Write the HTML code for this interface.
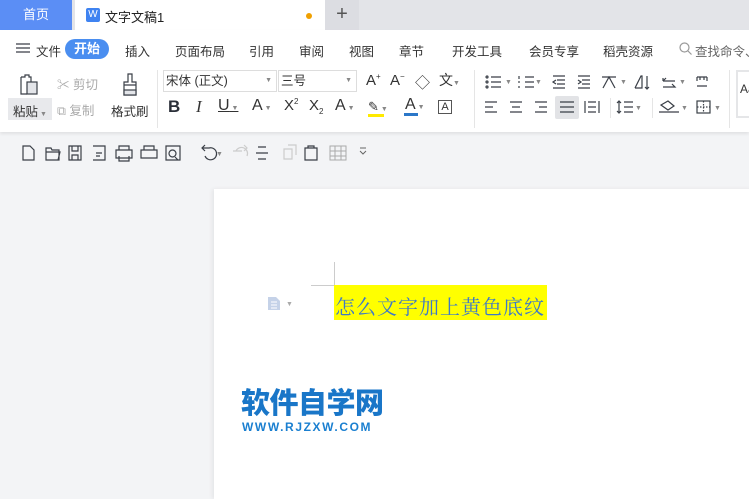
<!DOCTYPE html>
<html><head><meta charset="utf-8"><style>
*{margin:0;padding:0;box-sizing:border-box}
body{width:749px;height:492px;overflow:hidden;background:#f3f4f6;font-family:"Liberation Sans","Noto Sans CJK SC",sans-serif;font-size:12px;color:#333;position:relative}
.a{position:absolute;white-space:nowrap}
svg{position:absolute;overflow:visible}
.ic{fill:none;stroke:#3a3f47;stroke-width:1.2}
</style></head><body>
<div class="a" style="left:0;top:0;width:749px;height:30px;background:#e3e4e8"></div>
<div class="a" style="left:0;top:0;width:72px;height:30px;background:#5b8ef5;color:#fff;font-size:13px;line-height:30px;text-align:center">首页</div>
<div class="a" style="left:75px;top:0;width:250px;height:30px;background:#fff"></div>
<div class="a" style="left:86px;top:8px;width:14px;height:14px;background:#3f83f1;border-radius:2px;color:#fff;font-size:10px;line-height:14px;text-align:center">W</div>
<div class="a" style="left:105px;top:7px;font-size:13px;color:#222">文字文稿1</div>
<div class="a" style="left:306px;top:13px;width:6px;height:6px;border-radius:3px;background:#f0a000"></div>
<div class="a" style="left:325px;top:0;width:34px;height:30px;background:#dcdde2;font-size:20px;line-height:28px;text-align:center;color:#555">+</div>
<div class="a" style="left:0;top:30px;width:749px;height:102px;background:#fff;box-shadow:0 2px 3px rgba(0,0,0,.08)"></div>
<svg style="left:16px;top:43px" width="14" height="10"><path class="ic" d="M0 1H14M0 5H14M0 9H14"/></svg>
<div class="a" style="left:36px;top:41px;font-size:12.5px">文件</div>
<div class="a" style="left:65px;top:39px;width:44px;height:20px;background:#4a8ef0;border-radius:10px;color:#fff;font-weight:bold;font-size:13px;line-height:20px;text-align:center">开始</div>
<div class="a" style="left:125px;top:41px;font-size:12.5px">插入</div>
<div class="a" style="left:175px;top:41px;font-size:12.5px">页面布局</div>
<div class="a" style="left:249px;top:41px;font-size:12.5px">引用</div>
<div class="a" style="left:299px;top:41px;font-size:12.5px">审阅</div>
<div class="a" style="left:349px;top:41px;font-size:12.5px">视图</div>
<div class="a" style="left:399px;top:41px;font-size:12.5px">章节</div>
<div class="a" style="left:452px;top:41px;font-size:12.5px">开发工具</div>
<div class="a" style="left:529px;top:41px;font-size:12.5px">会员专享</div>
<div class="a" style="left:603px;top:41px;font-size:12.5px">稻壳资源</div>
<svg style="left:679px;top:42px" width="13" height="13"><circle cx="5.5" cy="5.5" r="4.5" fill="none" stroke="#999" stroke-width="1.2"/><path d="M9 9L12.5 12.5" stroke="#999" stroke-width="1.2"/></svg>
<div class="a" style="left:695px;top:41px;font-size:12.5px;color:#666">查找命令、</div>
<div class="a" style="left:8px;top:71px;width:44px;height:49px;background:#e8e9ec"></div>
<div class="a" style="left:8px;top:71px;width:44px;height:27px;background:#fff"></div>
<svg style="left:18px;top:73px" width="24" height="24"><path class="ic" d="M3 4H7V2H11V4H13V9M3 4V21H9" /><rect class="ic" x="9" y="9" width="10" height="12" style="fill:#e3e5e9"/></svg>
<div class="a" style="left:13px;top:101px;font-size:12.5px">粘贴<span style="font-size:7px;color:#888"> ▼</span></div>
<div class="a" style="left:57px;top:74px;font-size:12.5px;color:#aaa">✂ 剪切</div>
<div class="a" style="left:57px;top:100px;font-size:12.5px;color:#aaa">⧉ 复制</div>
<svg style="left:118px;top:73px" width="24" height="24"><path class="ic" d="M10 1H14V9H18V12H6V9H10ZM6 12V22H18V12" /><rect x="6" y="17" width="12" height="5" fill="#e3e5e9" stroke="#3a3f47" stroke-width="1.2"/></svg>
<div class="a" style="left:111px;top:101px;font-size:12.5px">格式刷</div>
<div class="a" style="left:157px;top:70px;width:1px;height:58px;background:#e5e5e5"></div>
<div class="a" style="left:163px;top:70px;width:114px;height:22px;border:1px solid #ddd;font-size:12.5px;line-height:20px;padding-left:2px">宋体 (正文)<span style="position:absolute;right:4px;font-size:7px;color:#888">▼</span></div>
<div class="a" style="left:278px;top:70px;width:79px;height:22px;border:1px solid #ddd;font-size:12.5px;line-height:20px;padding-left:2px">三号<span style="position:absolute;right:4px;font-size:7px;color:#888">▼</span></div>
<div class="a" style="left:366px;top:72px;font-size:15px">A<sup style="font-size:8px">+</sup></div>
<div class="a" style="left:390px;top:72px;font-size:15px">A<sup style="font-size:8px">−</sup></div>
<div class="a" style="left:415px;top:72px;font-size:15px">◇</div>
<div class="a" style="left:439px;top:70px;font-size:14px">文<span style="font-size:7px;color:#888">▼</span></div>
<div class="a" style="left:168px;top:97px;font-size:17px;font-weight:bold;color:#2a2f38">B</div>
<div class="a" style="left:196px;top:97px;font-size:17px;font-style:italic;font-family:'Liberation Serif'">I</div>
<div class="a" style="left:218px;top:97px;font-size:16px;text-decoration:underline">U<span style="font-size:7px;color:#888;text-decoration:none"> ▼</span></div>
<div class="a" style="left:252px;top:97px;font-size:16px">A<span style="font-size:7px;color:#888"> ▼</span></div>
<div class="a" style="left:284px;top:97px;font-size:15px">X<sup style="font-size:8px">2</sup></div>
<div class="a" style="left:309px;top:97px;font-size:15px">X<sub style="font-size:8px">2</sub></div>
<div class="a" style="left:335px;top:97px;font-size:16px">A<span style="font-size:7px;color:#888"> ▼</span></div>
<div class="a" style="left:368px;top:99px;font-size:13px">✎<span style="font-size:7px;color:#888"> ▼</span></div>
<div class="a" style="left:368px;top:114px;width:16px;height:3px;background:#ffea00"></div>
<div class="a" style="left:405px;top:96px;font-size:16px">A<span style="font-size:7px;color:#888"> ▼</span></div>
<div class="a" style="left:404px;top:113px;width:14px;height:3px;background:#2b77c8"></div>
<div class="a" style="left:438px;top:100px;width:14px;height:14px;border:1px solid #555;font-size:11px;line-height:12px;text-align:center">A</div>
<div class="a" style="left:474px;top:70px;width:1px;height:58px;background:#e5e5e5"></div>
<svg style="left:485px;top:75px" width="250" height="16"><g class="ic"><path d="M6 2H16M6 7H16M6 12H16"/><circle cx="2" cy="2" r="1"/><circle cx="2" cy="7" r="1"/><circle cx="2" cy="12" r="1"/>
<path d="M40 2H49M40 7H49M40 12H49M34 1V4M34 6V8M34 11V13"/>
<path d="M68 1H80M72 5H80M72 9H80M68 13H80M71 5L68 7L71 9"/>
<path d="M93 1H105M97 5H105M97 9H105M93 13H105M93 5L96 7L93 9"/>
<path d="M118 13L124 2L130 13M117 2H131"/>
<path d="M150 13L156 1H157V13H150M162 1V14M160 12L162 14L164 12"/>
<path d="M178 6H190M178 6L181 3M178 12H190L187 9M178 3V6"/>
<path d="M212 2H222M212 2V6M222 2V6M215 2V5M219 2V5M212 11H222"/></g>
<text x="20" y="9" font-size="7" fill="#888">▼</text><text x="50" y="9" font-size="7" fill="#888">▼</text><text x="135" y="9" font-size="7" fill="#888">▼</text><text x="194" y="9" font-size="7" fill="#888">▼</text></svg>
<div class="a" style="left:555px;top:96px;width:24px;height:23px;background:#e2e3e6;border-radius:2px"></div>
<svg style="left:485px;top:101px" width="250" height="16"><g class="ic"><path d="M0 1H12M0 6H8M0 11H12"/><path d="M25 1H37M27 6H35M25 11H37"/><path d="M50 1H62M54 6H62M50 11H62"/><path d="M75 1H89M75 6H89M75 11H89"/><path d="M100 0V12M114 0V12M103 1H111M103 11H111M103 6H111"/><path d="M134 0V12M132 2L134 0L136 2M132 10L134 12L136 10M139 1H148M139 6H148M139 11H148"/><path d="M176 4L183 0L189 5L183 9ZM174 11H194"/><rect x="212" y="0" width="13" height="12"/><path d="M218.5 0V12M212 6H225" stroke-dasharray="1.5 1.5"/></g>
<text x="150" y="9" font-size="7" fill="#888">▼</text><text x="196" y="9" font-size="7" fill="#888">▼</text><text x="229" y="9" font-size="7" fill="#888">▼</text></svg>
<div class="a" style="left:610px;top:98px;width:1px;height:20px;background:#e5e5e5"></div>
<div class="a" style="left:652px;top:98px;width:1px;height:20px;background:#e5e5e5"></div>
<div class="a" style="left:729px;top:70px;width:1px;height:58px;background:#e5e5e5"></div>
<div class="a" style="left:736px;top:70px;width:20px;height:48px;border:2px solid #e5e6e8;font-size:12px;padding:10px 0 0 2px">Aa</div>
<svg style="left:22px;top:145px" width="360" height="18"><g class="ic"><path d="M1 1H8L12 5V15H1Z"/><path d="M24 3H29L30 5H37V15H24ZM24 7H38L36 15"/><path d="M47 1H59V15H47ZM50 1V6H56V1M50 15V10H56V15"/><path d="M71 1H83V15H71M74 8H80M74 11H78"/><path d="M94 5H110V13H94ZM97 5V1H107V5M97 11V16H107V11"/><path d="M119 5H135V13H119ZM122 5V1H132V5"/><path d="M144 1H158V15H144ZM153 12L156 15"/><circle cx="150.5" cy="8.5" r="3.5"/><path d="M183 11A6 6 0 1 0 187 3H180M183 0L180 3L183 6"/></g>
<path d="M211 6H220M222 0L225 3L222 6M225 11A6 6 0 0 0 214 6" stroke="#ccc" fill="none" stroke-width="1.2"/>
<g class="ic"><path d="M236 2H244M234 8H246M236 14H244"/><path d="M283 3H295V15H283ZM286 3V1H292V3"/></g>
<path d="M262 4H270V14H262ZM266 0H274V10" stroke="#ccc" fill="none" stroke-width="1.2"/>
<path d="M308 1H324V15H308ZM308 6H324M308 11H324M313 1V15M319 1V15" stroke="#aaa" fill="none" stroke-width="1"/>
<text x="194" y="11" font-size="7" fill="#888">▼</text><path d="M338 6L341 9L344 6M338 3H344" stroke="#666" fill="none"/></svg>
<div class="a" style="left:214px;top:189px;width:540px;height:310px;background:#fff;box-shadow:-2px 0 4px rgba(0,0,0,.06)"></div>
<div class="a" style="left:334px;top:262px;width:1px;height:24px;background:#ccc"></div>
<div class="a" style="left:311px;top:285px;width:23px;height:1px;background:#ccc"></div>
<svg style="left:268px;top:297px" width="30" height="14"><path d="M0 0H8L12 4V13H0Z" fill="#c5d2e8"/><path d="M3 5H9M3 8H9M3 11H9" stroke="#fff"/><text x="18" y="9" font-size="7" fill="#aaa">▼</text></svg>
<div class="a" style="left:334px;top:285px;width:213px;height:35px;background:#ffff00"></div>
<div class="a" style="left:335px;top:291px;font-family:'Noto Serif CJK SC',serif;font-size:20px;color:#3e79c8;letter-spacing:1px">怎么文字加上黄色底纹</div>
<div class="a" style="left:241px;top:387px;font-size:29px;font-weight:900;color:#1976c8;letter-spacing:-0.5px;line-height:34px">软件自学网</div>
<div class="a" style="left:242px;top:420px;font-size:12px;font-weight:bold;color:#1a7fd0;letter-spacing:1.6px">WWW.RJZXW.COM</div>
</body></html>
